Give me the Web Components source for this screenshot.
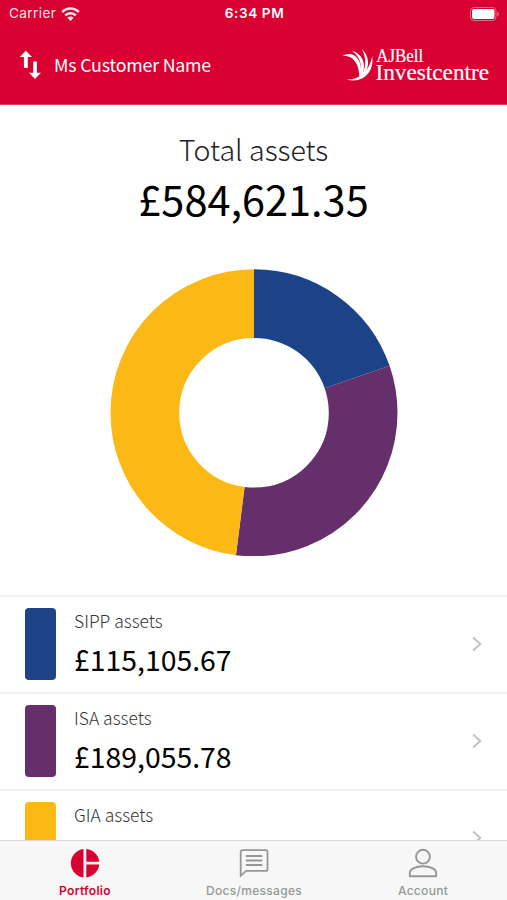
<!DOCTYPE html>
<html lang="en">
  <head>
    <meta charset="UTF-8" />
    <title>Portfolio</title>
    <style>
      body {
        margin: 0;
        background: #fff;
        font-family: "Noto Sans CJK SC", "Noto Sans", sans-serif;
      }
    </style>
  </head>

  <body>
    <portfolio-app></portfolio-app>

    <template id="app--content">
      <style>
        :host {
          display: flex;
          flex-direction: column;
          height: 100vh;
          overflow: hidden;
        }
        header {
          flex: none;
          height: 105px;
          box-sizing: border-box;
          border-bottom: 1px solid #e0436a;
          background: #d90032;
          color: #fff;
        }
        main {
          flex: 1;
          min-height: 0;
          overflow: hidden;
        }
      </style>
      <header>
        <status-bar>6:34 PM</status-bar>
        <customer-bar>Ms Customer Name</customer-bar>
      </header>
      <main>
        <total-assets amount="£584,621.35">Total assets</total-assets>
        <donut-chart values="115105.67,189055.78,280459.90" colors="#1c4287,#652f6c,#fcb814"></donut-chart>
        <asset-row color="#1c4287" amount="£115,105.67">SIPP assets</asset-row>
        <asset-row color="#652f6c" amount="£189,055.78">ISA assets</asset-row>
        <asset-row color="#fcb814">GIA assets</asset-row>
      </main>
      <tab-bar>
        <tab-item icon="portfolio" active>Portfolio</tab-item>
        <tab-item icon="messages">Docs/messages</tab-item>
        <tab-item icon="account">Account</tab-item>
      </tab-bar>
    </template>

    <template id="status--content">
      <style>
        :host {
          display: grid;
          grid-template-columns: 1fr auto 1fr;
          align-items: center;
          height: 27px;
          padding: 0 7px 0 9px;
          font: 400 13.6px/27px Inter, sans-serif;
          letter-spacing: 0.4px;
        }
        .carrier {
          display: flex;
          align-items: center;
          gap: 5px;
          opacity: 0.9;
        }
        .time {
          font-weight: 600;
          letter-spacing: 0.6px;
        }
        .battery {
          justify-self: end;
        }
        svg {
          display: block;
        }
      </style>
      <span class="carrier">
        <span>Carrier</span>
        <svg width="19" height="14" viewBox="0 0 19 14" fill="none" stroke="#fff" stroke-width="2.5">
          <path d="M1.2 5.1C5.8.4 13.2.4 17.8 5.1M4.2 8.4c3-2.900 7.600-2.900 10.600 0" />
          <path d="M6.300 10.700c1.800-1.600 4.600-1.600 6.400 0L9.500 13.900z" fill="#fff" stroke="none" />
        </svg>
      </span>
      <span class="time"><slot></slot></span>
      <svg class="battery" width="30" height="14" viewBox="0 0 30 14">
        <rect x=".5" y=".5" width="25.500" height="13" rx="3.500" fill="none" stroke="#fff" stroke-opacity=".4" />
        <rect x="2" y="2" width="22.500" height="10" rx="2" fill="#fff" />
        <path d="M27.400 4.800c2 .8 2 3.600 0 4.400z" fill="#fff" fill-opacity=".5" />
      </svg>
    </template>

    <template id="customer--content">
      <style>
        :host {
          display: flex;
          align-items: center;
          height: 76px;
          padding: 0 12px 0 20px;
          font-size: 17.8px;
        }
        .name {
          flex: 1;
          margin-left: 12px;
          padding-bottom: 2px;
          line-height: 24px;
          letter-spacing: -0.2px;
        }
        svg {
          display: block;
        }
      </style>
      <svg width="22" height="30" viewBox="0 0 22 30" fill="#fff">
        <path d="M5.800.8 12 6.900H7.800V18H3.900V6.900H-.2z" />
        <path d="M13.200 11.500h3.700v11.200H21l-6 6.300-6-6.300h4.200z" />
      </svg>
      <span class="name"><slot></slot></span>
      <brand-logo></brand-logo>
    </template>

    <template id="logo--content">
      <style>
        :host {
          display: block;
        }
        svg {
          display: block;
        }
        text {
          font-family: "Liberation Serif", serif;
          fill: #fff;
          stroke: #fff;
          stroke-width: 0.2px;
        }
      </style>
      <svg width="154" height="46" viewBox="0 -4 154 46">
        <g fill="#fff">
          <path d="M1.300 10.200C10.500 4.300 21.500 11 20 28.500c-.2 1.200-.8 2.200-1.600 2.900C18.500 20 13.500 8.800 1.300 10.200z" />
          <path d="M10.800 4.800c10 2.700 14.700 12.200 11 22.700-.8 2-2 3.500-3.600 4.500C22.200 21.500 19.500 10.500 10.800 4.800z" />
          <path d="M20.800 3c7.500 7 8.400 17.500 2.200 25.300-1.300 1.600-2.700 2.900-4.400 3.700C24.900 24 26.300 13 20.800 3z" />
          <path d="M31.200 10.300C33.500 25.500 22.500 38 5.600 33.600 17.500 34 28.200 26.500 31.200 10.300z" />
        </g>
        <text x="35.200" y="15.800" font-size="19" textLength="47" lengthAdjust="spacingAndGlyphs">AJBell</text>
        <text x="34.500" y="34.300" font-size="23.500" textLength="113.500" lengthAdjust="spacingAndGlyphs">Investcentre</text>
      </svg>
    </template>

    <template id="total--content">
      <style>
        :host {
          display: flex;
          flex-direction: column;
          align-items: center;
          padding-top: 25px;
          color: #000;
        }
        .label {
          font-size: 28.600px;
          font-weight: 300;
          line-height: 38px;
          color: #222;
        }
        .amount {
          font-size: 41.500px;
          line-height: 60px;
        }
      </style>
      <span class="label"><slot></slot></span>
      <span class="amount"></span>
    </template>

    <template id="donut--content">
      <style>
        :host {
          display: flex;
          justify-content: center;
          padding: 41px 0 39px 1px;
        }
        svg {
          display: block;
        }
        circle {
          fill: none;
          stroke-width: 68.700;
        }
      </style>
      <svg width="288" height="287" viewBox="-144 -143.800 288 287"></svg>
    </template>

    <template id="row--content">
      <style>
        :host {
          display: flex;
          align-items: flex-start;
          height: 97px;
          box-sizing: border-box;
          border-top: 2px solid #f1f1f1;
          padding: 11px 25px 0;
        }
        .swatch {
          width: 31px;
          height: 72px;
          border-radius: 4px;
          background: var(--swatch);
        }
        .text {
          flex: 1;
          display: flex;
          flex-direction: column;
          margin-left: 18px;
        }
        .label {
          padding-top: 1px;
          font-size: 17.500px;
          font-weight: 300;
          line-height: 24px;
          color: #333;
        }
        .amount {
          font-size: 28.400px;
          line-height: 51px;
          color: #000;
        }
        svg {
          display: block;
          margin-top: 28px;
        }
      </style>
      <span class="swatch"></span>
      <span class="text">
        <span class="label"><slot></slot></span>
        <span class="amount"></span>
      </span>
      <svg width="10" height="16" viewBox="0 0 10 16" fill="none" stroke="#c4c4c6" stroke-width="2.200">
        <path d="M1.200 1.500 8.200 8l-7 6.500" />
      </svg>
    </template>

    <template id="tabs--content">
      <style>
        :host {
          flex: none;
          display: grid;
          grid-template-columns: repeat(3, 1fr);
          height: 60px;
          box-sizing: border-box;
          border-top: 1px solid #d8d8d8;
          background: #f7f7f7;
        }
      </style>
      <slot></slot>
    </template>

    <template id="tab--content">
      <style>
        :host {
          display: flex;
          flex-direction: column;
          align-items: center;
          padding-top: 7px;
          color: #949796;
          font: 500 12px/16px Inter, sans-serif;
          letter-spacing: 0.3px;
        }
        :host([active]) {
          color: #d90032;
          font-weight: 600;
        }
        svg {
          display: block;
          margin-bottom: 5px;
        }
        span {
          padding-left: 1px;
        }
      </style>
      <svg width="30" height="30" viewBox="0 0 30 30"></svg>
      <span><slot></slot></span>
    </template>

    <script>
      class BaseElement extends HTMLElement {
        constructor(id) {
          super();
          const template = document.getElementById(id).content;
          this.attachShadow({ mode: "open" }).appendChild(template.cloneNode(true));
        }

        $(selector) {
          return this.shadowRoot.querySelector(selector);
        }
      }

      class StatusBar extends BaseElement {
        constructor() {
          super("status--content");
        }
      }

      class BrandLogo extends BaseElement {
        constructor() {
          super("logo--content");
        }
      }

      class CustomerBar extends BaseElement {
        constructor() {
          super("customer--content");
        }
      }

      class TotalAssets extends BaseElement {
        constructor() {
          super("total--content");
        }

        connectedCallback() {
          this.$(".amount").textContent = this.getAttribute("amount");
        }
      }

      class DonutChart extends BaseElement {
        constructor() {
          super("donut--content");
        }

        connectedCallback() {
          const values = this.getAttribute("values").split(",").map(Number);
          const colors = this.getAttribute("colors").split(",");
          const total = values.reduce((a, b) => a + b, 0);

          // each slice is a dash on a thick circle, starting at 12 o'clock
          let start = 0;
          this.$("svg").innerHTML = values
            .map((value, i) => {
              const share = (value / total) * 100;
              const slice = `<circle r="109.150" pathLength="100" stroke="${colors[i]}"
                stroke-dasharray="${share} ${100 - share}" stroke-dashoffset="${-start}" transform="rotate(-90)" />`;
              start += share;
              return slice;
            })
            .join("");
        }
      }

      class AssetRow extends BaseElement {
        constructor() {
          super("row--content");
        }

        connectedCallback() {
          this.style.setProperty("--swatch", this.getAttribute("color"));
          this.$(".amount").textContent = this.getAttribute("amount");
        }
      }

      class TabBar extends BaseElement {
        constructor() {
          super("tabs--content");
        }
      }

      const icons = {
        portfolio: `<g fill="currentColor">
          <path d="M13.500 1v28.400A14.300 14.300 0 0 1 13.500 1z" />
          <path d="M16.300 1a14.300 14.300 0 0 1 12.900 12.800H16.300zM16.300 16.600h12.900a14.300 14.300 0 0 1-12.900 12.800z" />
        </g>`,
        messages: `<g fill="none" stroke="currentColor" stroke-width="1.800">
          <path d="M3.400 2.200h23.400a1.700 1.700 0 0 1 1.700 1.700v17.300a1.700 1.700 0 0 1-1.700 1.700H7.200l-5.500 4.900V3.900a1.700 1.700 0 0 1 1.700-1.700z" />
          <path d="M6.800 8h16.500M6.800 12.500h16.500M6.800 17h16.500" />
        </g>`,
        account: `<g fill="none" stroke="currentColor" stroke-width="1.900">
          <circle cx="15" cy="8.700" r="6.900" />
          <path d="M1.800 28.200v-3c0-4.200 6-6.900 13.200-6.900s13.200 2.700 13.200 6.900v3z" stroke-linejoin="round" />
        </g>`,
      };

      class TabItem extends BaseElement {
        constructor() {
          super("tab--content");
        }

        connectedCallback() {
          this.$("svg").innerHTML = icons[this.getAttribute("icon")];
        }
      }

      class PortfolioApp extends BaseElement {
        constructor() {
          super("app--content");
        }
      }

      customElements.define("status-bar", StatusBar);
      customElements.define("brand-logo", BrandLogo);
      customElements.define("customer-bar", CustomerBar);
      customElements.define("total-assets", TotalAssets);
      customElements.define("donut-chart", DonutChart);
      customElements.define("asset-row", AssetRow);
      customElements.define("tab-bar", TabBar);
      customElements.define("tab-item", TabItem);
      customElements.define("portfolio-app", PortfolioApp);
    </script>
  </body>
</html>
